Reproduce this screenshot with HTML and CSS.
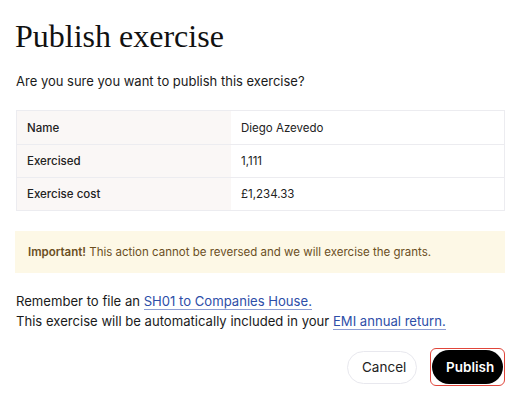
FILE: index.html
```html
<!DOCTYPE html>
<html>
<head>
<meta charset="utf-8">
<link rel="stylesheet" href="styles.css">
</head>
<body>
<div class="dialog">
  <h1 class="title">Publish exercise</h1>
  <p class="lead">Are you sure you want to publish this exercise?</p>
  <div class="table">
    <div class="row"><div class="label">Name</div><div class="value">Diego Azevedo</div></div>
    <div class="row"><div class="label">Exercised</div><div class="value">1,111</div></div>
    <div class="row"><div class="label">Exercise cost</div><div class="value">£1,234.33</div></div>
  </div>
  <div class="notice"><strong>Important!</strong> This action cannot be reversed and we will exercise the grants.</div>
  <div class="info">
    <div>Remember to file an <a href="#">SH01 to Companies House.</a></div>
    <div>This exercise will be automatically included in your <a href="#">EMI annual return.</a></div>
  </div>
  <div class="actions">
    <button class="btn cancel">Cancel</button>
    <span class="focus"><button class="btn publish">Publish</button></span>
  </div>
</div>
</body>
</html>
```
FILE: styles.css
```css
* { box-sizing: border-box; }
body { margin: 0; background: #fff; font-family: Inter, "Noto Sans", sans-serif; color: #1a1a1a; }
.dialog { padding: 17px 11px 0 15px; width: 516px; }
.title { font-family: "Liberation Serif", serif; font-weight: 400; font-size: 32px; line-height: 38px; margin: 0; color: #111; }
.lead { font-size: 13px; margin: 16px 0 0 1px; line-height: 20px; }
.table { margin: 19px 0 0 1px; border: 1px solid #ececf0; }
.row { display: grid; grid-template-columns: 214px 1fr; height: 33px; border-top: 1px solid #ececf0; }
.row:first-child { border-top: none; height: 33px; }
.label { background: #faf7f6; padding: 0 10px; display: flex; align-items: center; font-size: 11.5px; font-weight: 500; color: #222; }
.value { padding: 0 10px; display: flex; align-items: center; font-size: 11.5px; color: #222; }
.notice { margin-top: 20px; background: #fdf8e6; color: #6b4f1f; font-size: 11.5px; padding: 13px 13px; line-height: 16px; }
.notice strong { font-weight: 600; }
.info { margin: 18px 0 0 1px; font-size: 13.1px; line-height: 20px; color: #1a1a1a; }
.info a { color: #2d4ea8; text-decoration: none; border-bottom: 1px solid #8d9ed4; }
.actions { display: flex; justify-content: flex-end; align-items: center; gap: 13px; margin-top: 17px; }
.btn { font-family: Inter, sans-serif; font-size: 13.5px; border-radius: 17px; height: 34px; padding: 0 14px; cursor: pointer; }
.cancel { background: #fff; border: 1px solid #e8e8ee; color: #222; width: 70px; height: 33px; }
.focus { display: inline-flex; border: 1px solid #e0453a; border-radius: 6px; padding: 1px; }
.publish { background: #000; color: #fff; border: none; font-weight: 600; width: 71px; }
```
